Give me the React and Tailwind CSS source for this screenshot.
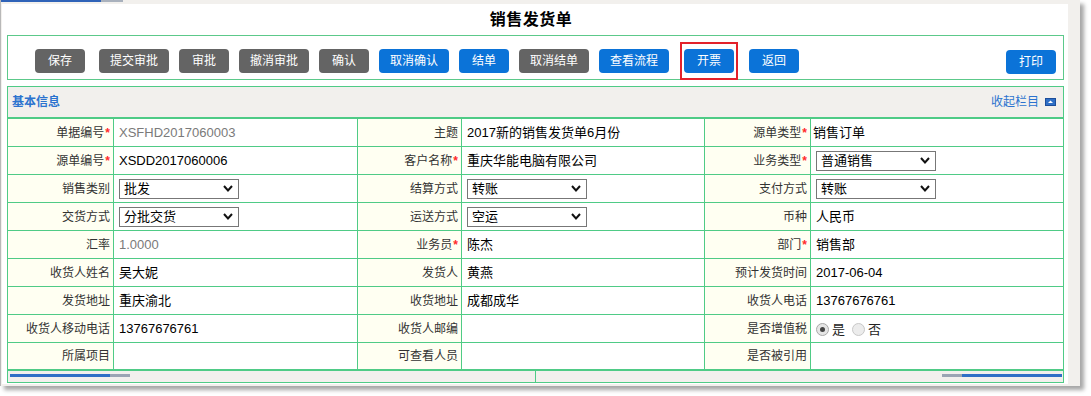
import React from "react";

const FONT = { fontFamily: '"Liberation Sans", "Noto Sans CJK SC", sans-serif' };

function Btn({ text, blue, className = "" }) {
  return (
    <div
      className={`h-[24px] rounded-[4px] flex items-center justify-center text-[12px] text-white ${
        blue ? "bg-[#0b73d8]" : "bg-[#646464]"
      } ${className}`}
    >
      {text}
    </div>
  );
}

function Select({ value }) {
  return (
    <div className="w-[120px] h-[20px] border border-[#777] bg-white flex items-center justify-between pl-[4px] pr-[5px] text-[13px] text-black">
      <span>{value}</span>
      <svg width="10" height="7" viewBox="0 0 10 7">
        <polyline points="1,1 5,5.5 9,1" fill="none" stroke="#111" strokeWidth="2" />
      </svg>
    </div>
  );
}

function Label({ text, req, w }) {
  return (
    <div
      className={`${w} h-full border-r border-[#4fcb86] bg-[#fffff2] flex items-center justify-end pr-[3px] text-[12px] text-[#333]`}
    >
      {text}
      {req && <span className="text-[#ff2a2a] text-[12px] font-bold ml-[1px] leading-none">*</span>}
    </div>
  );
}

function Value({ children, w, last, pl = "pl-[5px]", gray }) {
  return (
    <div
      className={`${w} h-full ${last ? "" : "border-r border-[#4fcb86]"} bg-white flex items-center ${pl} text-[13px] ${
        gray ? "text-[#7a7a7a]" : "text-black"
      }`}
    >
      {children}
    </div>
  );
}

function Radio({ checked }) {
  return (
    <span
      className={`inline-flex items-center justify-center w-[13px] h-[13px] rounded-full border ${
        checked ? "border-[#a9a9a9] bg-[#e6e6e6]" : "border-[#c8c8c8] bg-[#ececec]"
      }`}
    >
      {checked && <span className="w-[5px] h-[5px] rounded-full bg-[#444]" />}
    </span>
  );
}

const rows = [
  [
    { l: "单据编号", r: true, v: "XSFHD2017060003", gray: true },
    { l: "主题", v: "2017新的销售发货单6月份" },
    { l: "源单类型", r: true, v: "销售订单", pl: "pl-[2px]" },
  ],
  [
    { l: "源单编号", r: true, v: "XSDD2017060006" },
    { l: "客户名称", r: true, v: "重庆华能电脑有限公司" },
    { l: "业务类型", r: true, sel: "普通销售" },
  ],
  [
    { l: "销售类别", sel: "批发" },
    { l: "结算方式", sel: "转账" },
    { l: "支付方式", sel: "转账" },
  ],
  [
    { l: "交货方式", sel: "分批交货" },
    { l: "运送方式", sel: "空运" },
    { l: "币种", v: "人民币" },
  ],
  [
    { l: "汇率", v: "1.0000", gray: true },
    { l: "业务员", r: true, v: "陈杰" },
    { l: "部门", r: true, v: "销售部" },
  ],
  [
    { l: "收货人姓名", v: "吴大妮" },
    { l: "发货人", v: "黄燕" },
    { l: "预计发货时间", v: "2017-06-04" },
  ],
  [
    { l: "发货地址", v: "重庆渝北" },
    { l: "收货地址", v: "成都成华" },
    { l: "收货人电话", v: "13767676761" },
  ],
  [
    { l: "收货人移动电话", v: "13767676761" },
    { l: "收货人邮编", v: "" },
    { l: "是否增值税", radio: true },
  ],
  [
    { l: "所属项目", v: "" },
    { l: "可查看人员", v: "" },
    { l: "是否被引用", v: "" },
  ],
];

const lw = ["w-[106px]", "w-[104px]", "w-[106px]"];
const vw = ["w-[244px]", "w-[243px]", "w-[252px]"];

export default function App() {
  return (
    <div className="w-[1091px] h-[396px] bg-white relative overflow-hidden" style={FONT}>
      <div className="w-[1080px] h-[386px] bg-[#f2f0ed] border-l border-[#b8b8b8] shadow-[4px_4px_4px_rgba(0,0,0,0.35)] flex flex-col">
        {/* top strip */}
        <div className="h-[4px] flex items-start">
          <div className="w-[100px] h-[2px] bg-[#2f63b8]" />
          <div className="w-[22px] h-[2px] bg-[#a9b1bd]" />
        </div>
        {/* white panel */}
        <div className="ml-[1px] w-[1066px] h-[380px] bg-white flex flex-col">
          <div className="h-[31px] flex items-center justify-center">
            <span className="text-[16px] font-bold text-black tracking-[0.5px] -ml-[8px]">销售发货单</span>
          </div>
          {/* toolbar */}
          <div className="ml-[5px] w-[1057px] h-[45px] border border-[#5cc98a] flex items-start pt-[13px] pl-[27px]">
            <Btn text="保存" className="w-[50px]" />
            <Btn text="提交审批" className="w-[70px] ml-[14px]" />
            <Btn text="审批" className="w-[50px] ml-[10px]" />
            <Btn text="撤消审批" className="w-[70px] ml-[10px]" />
            <Btn text="确认" className="w-[50px] ml-[10px]" />
            <Btn text="取消确认" blue className="w-[70px] ml-[10px]" />
            <Btn text="结单" blue className="w-[50px] ml-[10px]" />
            <Btn text="取消结单" className="w-[70px] ml-[10px]" />
            <Btn text="查看流程" blue className="w-[70px] ml-[10px]" />
            <div className="relative ml-[15px]">
              <Btn text="开票" blue className="w-[50px]" />
              <div className="absolute left-[-4px] right-[-4px] top-[-7px] bottom-[-7px] border-2 border-[#e3212b]" />
            </div>
            <Btn text="返回" blue className="w-[50px] ml-[15px]" />
            <Btn text="打印" blue className="w-[50px] ml-auto mr-[7px] mt-[1px]" />
          </div>
          {/* section */}
          <div className="ml-[5px] mt-[6px] w-[1057px] border-x border-t border-[#4fcb86] flex flex-col">
            <div className="h-[32px] bg-[#f2f0ed] flex items-center justify-between pl-[4px] pr-[7px] border-b-2 border-[#4fcb86]">
              <span className="text-[12px] font-bold text-[#2b73cf]">基本信息</span>
              <div className="flex items-center gap-[6px]">
                <span className="text-[12px] text-[#2b73cf]">收起栏目</span>
                <svg width="11" height="8" viewBox="0 0 11 8">
                  <rect x="0" y="0" width="11" height="8" fill="#2f6fc6" />
                  <rect x="0.5" y="0.5" width="10" height="7" fill="none" stroke="#1d4e9a" strokeWidth="1" />
                  <polygon points="3,5 5.5,2.5 8,5" fill="#fff" />
                </svg>
              </div>
            </div>
            {rows.map((row, i) => (
              <div
                key={i}
                className={`h-[28px] flex ${i === rows.length - 1 ? "border-b-2" : "border-b"} border-[#4fcb86]`}
              >
                {row.map((c, j) => (
                  <React.Fragment key={j}>
                    <Label text={c.l} req={c.r} w={lw[j]} />
                    <Value w={vw[j]} last={j === 2} pl={c.pl} gray={c.gray}>
                      {c.sel ? (
                        <Select value={c.sel} />
                      ) : c.radio ? (
                        <div className="flex items-center text-[13px] text-[#222] pt-[2px]">
                          <Radio checked />
                          <span className="ml-[3px] mr-[7px]">是</span>
                          <Radio />
                          <span className="ml-[3px]">否</span>
                        </div>
                      ) : (
                        c.v
                      )}
                    </Value>
                  </React.Fragment>
                ))}
              </div>
            ))}
            {/* scroll bar strip */}
            <div className="h-[12px] flex bg-[#f2f0ed] border-b border-[#4fcb86]">
              <div className="w-[528px] border-r border-[#4fcb86] pt-[3px] pl-[2px]">
                <div className="flex h-[3px]">
                  <div className="w-[100px] bg-[#2f6fc6]" />
                  <div className="w-[20px] bg-[#9aa4b3]" />
                </div>
              </div>
              <div className="flex-1 pt-[3px] pr-[1px] flex justify-end">
                <div className="flex h-[3px]">
                  <div className="w-[20px] bg-[#9aa4b3]" />
                  <div className="w-[100px] bg-[#2f6fc6]" />
                </div>
              </div>
            </div>
          </div>
        </div>
      </div>
    </div>
  );
}
